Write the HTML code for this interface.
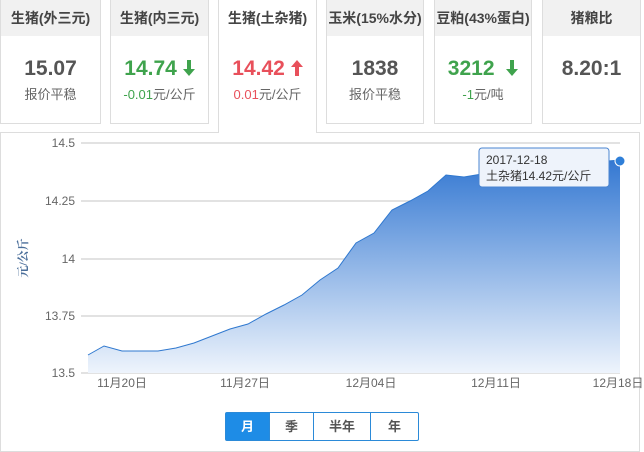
<!DOCTYPE html>
<html><head><meta charset="utf-8"><style>
*{margin:0;padding:0;box-sizing:border-box}
body{width:644px;height:452px;background:#fff;font-family:"Liberation Sans","Microsoft YaHei","Noto Sans CJK SC",sans-serif;position:relative;overflow:hidden}
.card{position:absolute;top:0;height:124px;border:1px solid #ddd;border-top:none;background:#fff;text-align:center}
.card .h{height:36px;background:#f1f1f1;line-height:36px;font-size:14px;color:#444;font-weight:bold}
.card .v{font-size:21px;font-weight:bold;color:#555;margin-top:20px;height:26px;line-height:26px}
.card .s{font-size:13px;color:#666;margin-top:2px}
.card .g,.g{color:#3fa34d}.card .r,.r{color:#e8505b}
.active{height:133px;border-bottom:none;z-index:2}
.active .h{background:#fff}
.btns{position:absolute;left:225px;top:412px;height:29px;border:1px solid #2b8ad8;border-radius:2px;display:flex;font-size:13px;font-weight:bold;color:#555}
.btns div{height:27px;line-height:27px;text-align:center;border-right:1px solid #2b8ad8}
svg.ar{vertical-align:-1px}
</style></head><body>
<div class="card" style="left:0;width:101px"><div class="h">生猪(外三元)</div><div class="v">15.07</div><div class="s">报价平稳</div></div>
<div class="card" style="left:110px;width:99px"><div class="h">生猪(内三元)</div><div class="v g">14.74 <svg class="ar" width="12" height="16" viewBox="0 0 12 16"><path d="M4 0h4v9h4l-6 7-6-7h4z" fill="#3fa34d"/></svg></div><div class="s"><span class="g">-0.01</span>元/公斤</div></div>
<div class="card active" style="left:218px;width:99px"><div class="h">生猪(土杂猪)</div><div class="v r">14.42 <svg class="ar" width="12" height="16" viewBox="0 0 12 16"><path d="M4 16h4V7h4L6 0 0 7h4z" fill="#e8505b"/></svg></div><div class="s"><span class="r">0.01</span>元/公斤</div></div>
<div class="card" style="left:326px;width:98px"><div class="h">玉米(15%水分)</div><div class="v">1838</div><div class="s">报价平稳</div></div>
<div class="card" style="left:434px;width:98px"><div class="h">豆粕(43%蛋白)</div><div class="v g">3212 &nbsp;<svg class="ar" width="12" height="16" viewBox="0 0 12 16"><path d="M4 0h4v9h4l-6 7-6-7h4z" fill="#3fa34d"/></svg></div><div class="s"><span class="g">-1</span>元/吨</div></div>
<div class="card" style="left:542px;width:99px"><div class="h">猪粮比</div><div class="v">8.20:1</div></div>
<div style="position:absolute;left:0;top:132px;width:640px;height:320px;border:1px solid #ddd;z-index:1"></div>
<svg style="position:absolute;left:0;top:0;z-index:3" width="644" height="452">
<defs><linearGradient id="gr" x1="0" y1="0" x2="0" y2="1"><stop offset="0" stop-color="#3478d2"/><stop offset="1" stop-color="#eef4fc"/></linearGradient></defs>
<g stroke="#d8d8d8" stroke-width="1.5">
<line x1="81" y1="143" x2="620" y2="143"/><line x1="81" y1="201" x2="620" y2="201"/><line x1="81" y1="259" x2="620" y2="259"/><line x1="81" y1="316" x2="620" y2="316"/><line x1="81" y1="373" x2="620" y2="373"/></g>
<path d="M88,355 L104,346 122,351 140,351 158,351 176,348 194,343 212,336 230,329 248,324 266,314 284,305 302,295 320,280 338,268 356,243 374,233 392,210 410,201 428,191 446,175 464,177 482,174 500,172 518,171 536,168 554,168 572,166 590,164 608,161 620,160 L620,373 88,373Z" fill="url(#gr)"/>
<path d="M88,355 L104,346 122,351 140,351 158,351 176,348 194,343 212,336 230,329 248,324 266,314 284,305 302,295 320,280 338,268 356,243 374,233 392,210 410,201 428,191 446,175 464,177 482,174 500,172 518,171 536,168 554,168 572,166 590,164 608,161 620,160" fill="none" stroke="#2f78cf" stroke-width="1"/>
<circle cx="620" cy="161" r="5" fill="#2f7fd8" stroke="#fff" stroke-width="1"/>
<g font-size="12" fill="#666" text-anchor="end" font-family="Liberation Sans,sans-serif">
<text x="75" y="147">14.5</text><text x="75" y="205">14.25</text><text x="75" y="263">14</text><text x="75" y="320">13.75</text><text x="75" y="377">13.5</text></g>
<g font-size="12" fill="#666" text-anchor="middle" font-family="Liberation Sans,Noto Sans CJK SC,sans-serif">
<text x="122" y="387">11月20日</text><text x="245" y="387">11月27日</text><text x="371" y="387">12月04日</text><text x="496" y="387">12月11日</text><text x="618" y="387">12月18日</text></g>
<text transform="translate(27,258) rotate(-90)" text-anchor="middle" font-size="12" font-weight="bold" fill="#4a6e9a" font-family="Liberation Serif,Noto Serif CJK SC,serif">元/公斤</text>
<rect x="479" y="148" width="130" height="39" rx="3" fill="#eef3fb" stroke="#4a84d0"/>
<text x="486" y="164" font-size="12" fill="#333">2017-12-18</text>
<text x="486" y="180" font-size="12" fill="#333" font-family="Liberation Sans,Noto Sans CJK SC,sans-serif">土杂猪14.42元/公斤</text>
</svg>
<div class="btns" style="z-index:4"><div style="width:44px;background:#1e8ce6;color:#fff">月</div><div style="width:44px">季</div><div style="width:57px">半年</div><div style="width:47px;border-right:none">年</div></div>
</body></html>
